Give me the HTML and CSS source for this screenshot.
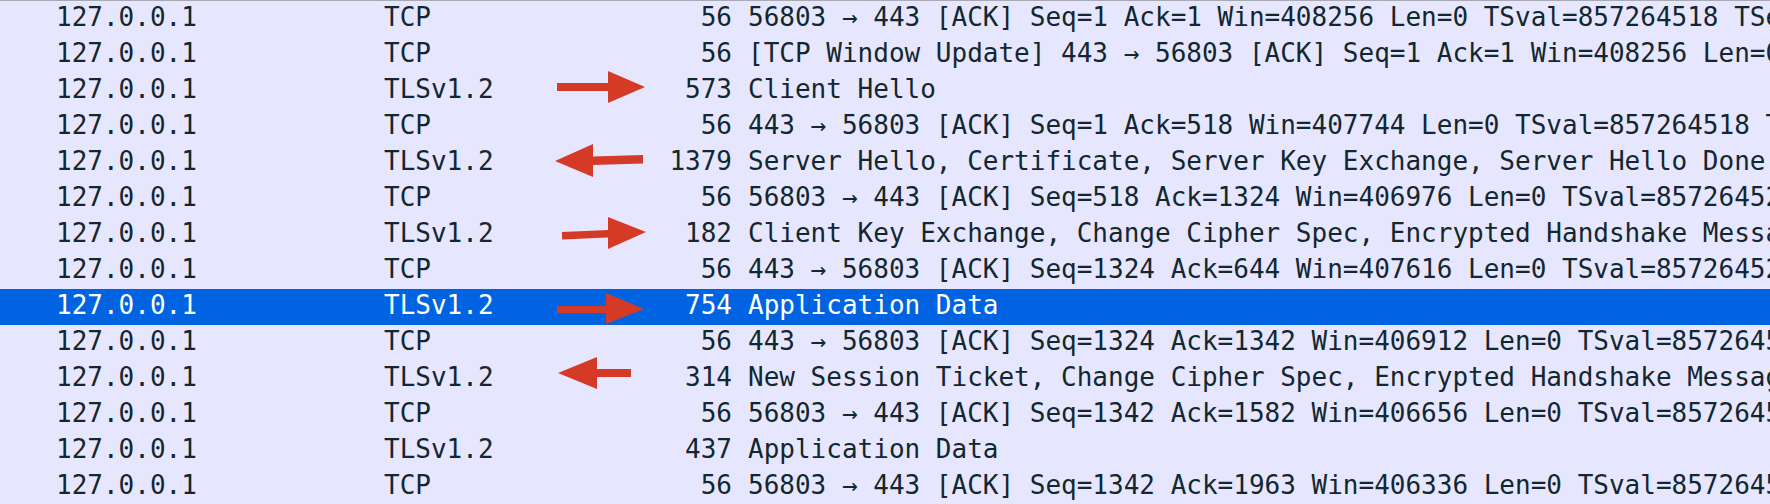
FILE: index.html
```html
<!DOCTYPE html>
<html>
<head>
<meta charset="utf-8">
<link rel="stylesheet" href="styles.css">
</head>
<body>
<div class="packets">
  <div class="row"><span class="src">127.0.0.1</span><span class="proto">TCP</span><span class="len">56</span><span class="info">56803 → 443 [ACK] Seq=1 Ack=1 Win=408256 Len=0 TSval=857264518 TSecr=857264518</span></div>
  <div class="row"><span class="src">127.0.0.1</span><span class="proto">TCP</span><span class="len">56</span><span class="info">[TCP Window Update] 443 → 56803 [ACK] Seq=1 Ack=1 Win=408256 Len=0 TSval=857264518</span></div>
  <div class="row"><span class="src">127.0.0.1</span><span class="proto">TLSv1.2</span><span class="len">573</span><span class="info">Client Hello</span></div>
  <div class="row"><span class="src">127.0.0.1</span><span class="proto">TCP</span><span class="len">56</span><span class="info">443 → 56803 [ACK] Seq=1 Ack=518 Win=407744 Len=0 TSval=857264518 TSecr=857264518</span></div>
  <div class="row"><span class="src">127.0.0.1</span><span class="proto">TLSv1.2</span><span class="len">1379</span><span class="info">Server Hello, Certificate, Server Key Exchange, Server Hello Done</span></div>
  <div class="row"><span class="src">127.0.0.1</span><span class="proto">TCP</span><span class="len">56</span><span class="info">56803 → 443 [ACK] Seq=518 Ack=1324 Win=406976 Len=0 TSval=857264520 TSecr=857264520</span></div>
  <div class="row"><span class="src">127.0.0.1</span><span class="proto">TLSv1.2</span><span class="len">182</span><span class="info">Client Key Exchange, Change Cipher Spec, Encrypted Handshake Message</span></div>
  <div class="row"><span class="src">127.0.0.1</span><span class="proto">TCP</span><span class="len">56</span><span class="info">443 → 56803 [ACK] Seq=1324 Ack=644 Win=407616 Len=0 TSval=857264520 TSecr=857264520</span></div>
  <div class="row selected"><span class="src">127.0.0.1</span><span class="proto">TLSv1.2</span><span class="len">754</span><span class="info">Application Data</span></div>
  <div class="row"><span class="src">127.0.0.1</span><span class="proto">TCP</span><span class="len">56</span><span class="info">443 → 56803 [ACK] Seq=1324 Ack=1342 Win=406912 Len=0 TSval=857264521 TSecr=857264521</span></div>
  <div class="row"><span class="src">127.0.0.1</span><span class="proto">TLSv1.2</span><span class="len">314</span><span class="info">New Session Ticket, Change Cipher Spec, Encrypted Handshake Message</span></div>
  <div class="row"><span class="src">127.0.0.1</span><span class="proto">TCP</span><span class="len">56</span><span class="info">56803 → 443 [ACK] Seq=1342 Ack=1582 Win=406656 Len=0 TSval=857264521 TSecr=857264521</span></div>
  <div class="row"><span class="src">127.0.0.1</span><span class="proto">TLSv1.2</span><span class="len">437</span><span class="info">Application Data</span></div>
  <div class="row"><span class="src">127.0.0.1</span><span class="proto">TCP</span><span class="len">56</span><span class="info">56803 → 443 [ACK] Seq=1342 Ack=1963 Win=406336 Len=0 TSval=857264521 TSecr=857264521</span></div>
</div>
<svg class="arrows" width="1770" height="504" viewBox="0 0 1770 504">
  <polygon points="557,83 608,83 608,71 645,87 608,103 608,91 557,91"/>
  <polygon points="555,161 593,144 593,156.5 643,155 643,163.5 593,165 593,177"/>
  <polygon points="562,232 608,230 608,217 646,232 608,249 608,237.5 562,239.5"/>
  <polygon points="557,306 606,306 606,293 644,309 606,324 606,313 557,313"/>
  <polygon points="558,373 597,357 597,369 631,369 631,377 597,377 597,389"/>
</svg>
</body>
</html>
```

FILE: styles.css
```css
html, body {
  margin: 0;
  padding: 0;
  background: #e7e6ff;
}

body {
  position: relative;
  width: 1770px;
  height: 504px;
  overflow: hidden;
}

.packets {
  border-top: 1px solid #a9a9b4;
  font-family: "DejaVu Sans Mono", "Liberation Mono", monospace;
  font-size: 26px;
  color: #12272e;
}

.row {
  display: grid;
  grid-template-columns: 328px 220px 128px 1fr;
  height: 36px;
  line-height: 32px;
  padding-bottom: 4px;
  box-sizing: border-box;
  padding-left: 56px;
  background: #e7e6ff;
  white-space: nowrap;
}

.row.selected {
  background: #0063e1;
  color: #ffffff;
}

.len {
  text-align: right;
}

.info {
  padding-left: 16px;
  overflow: hidden;
}

.arrows {
  position: absolute;
  top: 0;
  left: 0;
  fill: #d53a27;
}
```
